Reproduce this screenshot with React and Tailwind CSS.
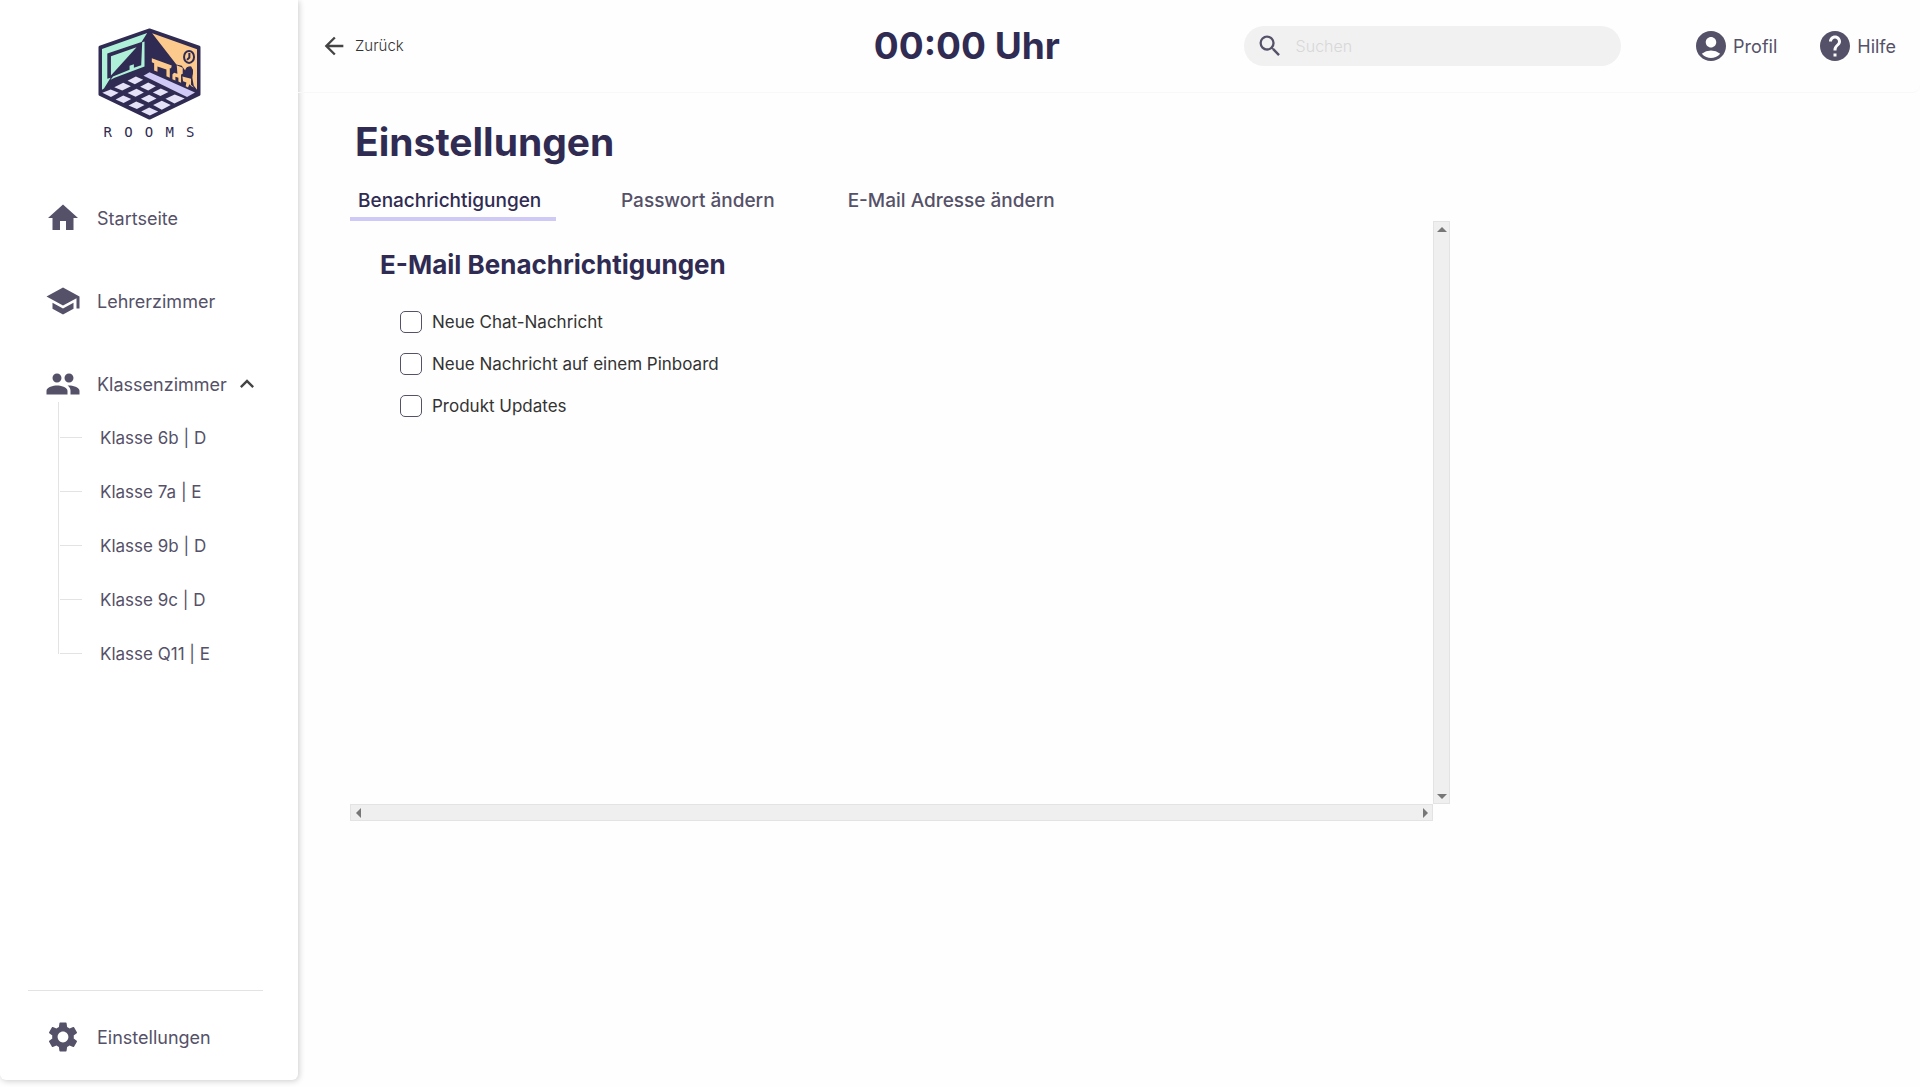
import React from 'react';
import {
  MdHome, MdSchool, MdPeople, MdSettings, MdSearch, MdAccountCircle, MdHelp, MdArrowBack, MdKeyboardArrowUp,
} from 'react-icons/md';

const classes = ['Klasse 6b | D', 'Klasse 7a | E', 'Klasse 9b | D', 'Klasse 9c | D', 'Klasse Q11 | E'];
const options = ['Neue Chat-Nachricht', 'Neue Nachricht auf einem Pinboard', 'Produkt Updates'];

function Logo() {
  return (
    <a href="#" aria-label="Rooms" className="flex w-[103px] flex-col items-center">
      <svg viewBox="50 40 310 278" className="w-full" aria-hidden="true">
        <path d="M205 46 L354 98 V240 L205 311 L56 240 V98 Z" fill="#302b52" stroke="#302b52" strokeWidth="9" strokeLinejoin="round" />
        <path d="M62 103 L198 55 L181 82 L78 117 V193 L88 190 L68 222 L62 226 Z" fill="#aff0d8" />
        <path d="M89 125 L166 98 L89 183 Z" fill="#aff0d8" />
        <path d="M183 83 L190 81 V156 L100 190 L88 196 L95 186 L145 166 V154 L158 149 V160 L180 152 Z" fill="#aff0d8" />
        <path d="M213 56 L348 104 V226 L338 213 L334 190 L336 168 L330 155 L318 158 L313 169 L302 154 L286 150 Z" fill="#fdca8e" />
        <path d="M212 131 L272 153 L270 161 L266 161 V190 L256 185 V165 L229 156 V172 L219 168 V146 L212 143 Z" fill="#fdca8e" />
        <path d="M287 152 L305 160 V178 L300 180 V205 L292 201 V190 L283 187 V198 L274 194 V180 L279 175 L289 178 Z" fill="#fdca8e" />
        <path d="M304 186 L330 193 V211 L339 219 L332 216 L325 209 L321 219 L314 215 L316 204 L306 200 Z" fill="#fdca8e" />
        <ellipse cx="324" cy="172" rx="12" ry="16" fill="#302b52" />
        <ellipse cx="324" cy="127" rx="15" ry="18" fill="#fdca8e" stroke="#302b52" strokeWidth="6" />
        <path d="M325 115 V129 L318 136" fill="none" stroke="#302b52" strokeWidth="6" />
        <path d="M205 173 L342 234 L318 248 L187 184 Z" fill="#cfcaf5" />
        <g fill="#e5e2f8">
          <path d="M164 186 L186 196 L161 209 L139 199 Z" />
          <path d="M201 204 L224 215 L201 228 L177 217 Z" />
          <path d="M239 222 L262 233 L238 245 L215 234 Z" />
          <path d="M281 240 L311 252 L280 267 L253 253 Z" />
          <path d="M126 205 L149 215 L123 228 L99 218 Z" />
          <path d="M166 223 L188 234 L163 247 L139 236 Z" />
          <path d="M204 241 L226 252 L202 264 L179 253 Z" />
          <path d="M242 259 L269 272 L242 286 L216 272 Z" />
          <path d="M88 225 L112 235 L89 248 L63 235 Z" />
          <path d="M126 243 L150 254 L127 266 L103 255 Z" />
          <path d="M165 261 L190 272 L167 284 L142 273 Z" />
          <path d="M204 279 L231 291 L206 303 L180 291 Z" />
        </g>
      </svg>
      <span className="mt-1 flex w-[91px] justify-between font-['DejaVu_Sans_Mono',monospace] text-[14px] leading-4 text-[#302b52]">
        <span>R</span><span>O</span><span>O</span><span>M</span><span>S</span>
      </span>
    </a>
  );
}

function NavItem({ icon: Icon, label, children }) {
  return (
    <a href="#" className="flex h-9 items-center pl-[45px] text-[18px] text-[#555168]">
      <Icon size={36} className="mr-4 shrink-0" />
      {label}
      {children}
    </a>
  );
}

function Sidebar() {
  return (
    <aside className="flex h-[calc(100vh-7px)] w-[298px] shrink-0 flex-col rounded-b-md bg-white shadow-[1px_1px_6px_rgba(0,0,0,0.2)]">
      <div className="flex justify-center pt-7">
        <Logo />
      </div>
      <nav className="mt-[60px] flex flex-col gap-[47px]">
        <NavItem icon={MdHome} label="Startseite" />
        <NavItem icon={MdSchool} label="Lehrerzimmer" />
        <div>
          <NavItem icon={MdPeople} label="Klassenzimmer">
            <MdKeyboardArrowUp size={28} className="mr-[37px] ml-auto text-[#444]" />
          </NavItem>
          <ul className="ml-[58px] flex flex-col">
            {classes.map((name) => (
              <li key={name} className="flex h-[54px] items-end text-[17px] text-[#555168] first:h-9">
                <span className="h-full w-px bg-[#e3e3e3]" />
                <span className="ml-px h-px w-[22px] bg-[#e3e3e3]" />
                <a href="#" className="-mb-3 ml-[18px] leading-6">{name}</a>
              </li>
            ))}
          </ul>
        </div>
      </nav>
      <div className="mt-auto pb-[25px]">
        <hr className="mr-[35px] mb-7 ml-7 border-[#e3e3e3]" />
        <NavItem icon={MdSettings} label="Einstellungen" />
      </div>
    </aside>
  );
}

function Header() {
  return (
    <header className="grid h-[93px] grid-cols-[35.5%_22.8%_1fr] items-center rounded-br-lg border-b border-[#f8f8f8]">
      <button type="button" className="flex items-center gap-[7px] pl-[22px] text-[15px] font-light text-[#333]">
        <MdArrowBack size={28} className="text-[#444]" />
        Zurück
      </button>
      <time className="text-[37px] font-bold whitespace-nowrap text-[#302b52]">00:00 Uhr</time>
      <div className="flex items-center justify-between pr-6">
        <label className="flex h-10 w-[377px] items-center gap-3 rounded-full bg-[#f1f1f1] pl-3">
          <MdSearch size={28} className="shrink-0 text-[#555168]" />
          <input type="search" aria-label="Suchen" placeholder="Suchen" className="w-full bg-transparent text-[16px] font-light outline-none placeholder:text-[#d8d8d8]" />
        </label>
        <nav className="flex gap-10 text-[18px] text-[#555168]">
          <a href="#" className="flex items-center gap-1"><MdAccountCircle size={36} />Profil</a>
          <a href="#" className="flex items-center gap-1"><MdHelp size={36} />Hilfe</a>
        </nav>
      </div>
    </header>
  );
}

function Arrow({ points, label }) {
  return (
    <button type="button" aria-label={label} className="flex size-[15px] items-center justify-center">
      <svg viewBox="0 0 10 10" className="size-[10px]" aria-hidden="true"><polygon points={points} fill="#777" /></svg>
    </button>
  );
}

function Settings() {
  return (
    <main className="pl-[52px]">
      <h1 className="mt-7 ml-[5px] text-[39px] leading-[42px] font-bold text-[#302b52]">Einstellungen</h1>
      <div role="tablist" className="mt-4 flex items-start gap-[57px] text-[19px] leading-6 font-medium text-[#555168]">
        <button role="tab" aria-selected="true" className="w-[206px] border-b-4 border-[#cfcaf5] px-2 pt-[10px] pb-1 text-left text-[#302b52]">Benachrichtigungen</button>
        <button role="tab" aria-selected="false" className="px-2 pt-[10px]">Passwort ändern</button>
        <button role="tab" aria-selected="false" className="px-2 pt-[10px]">E-Mail Adresse ändern</button>
      </div>
      <section className="grid w-full max-w-[1100px] grid-cols-[1fr_17px] grid-rows-[583px_17px]">
        <div className="pt-7 pl-[30px]">
          <h2 className="text-[26px] leading-8 font-bold text-[#302b52]">E-Mail Benachrichtigungen</h2>
          <div className="mt-[30px] ml-5 flex flex-col gap-5">
            {options.map((name) => (
              <label key={name} className="flex items-center gap-[10px] text-[17px] leading-[22px] text-[#333]">
                <input type="checkbox" className="size-[22px] appearance-none rounded-[5px] border border-[#555168] bg-white checked:bg-[#cfcaf5]" />
                {name}
              </label>
            ))}
          </div>
        </div>
        <div className="flex flex-col items-center justify-between border border-[#e3e3e3] bg-[#efefef]">
          <Arrow label="Nach oben" points="0,7 5,2 10,7" />
          <Arrow label="Nach unten" points="0,3 10,3 5,8" />
        </div>
        <div className="flex items-center justify-between border border-[#e3e3e3] bg-[#efefef]">
          <Arrow label="Nach links" points="7,0 7,10 2,5" />
          <Arrow label="Nach rechts" points="3,0 3,10 8,5" />
        </div>
      </section>
    </main>
  );
}

export default function App() {
  return (
    <div className="flex min-h-screen bg-[#fefefe] font-[Inter,sans-serif]">
      <Sidebar />
      <div className="min-w-0 flex-1">
        <Header />
        <Settings />
      </div>
    </div>
  );
}
